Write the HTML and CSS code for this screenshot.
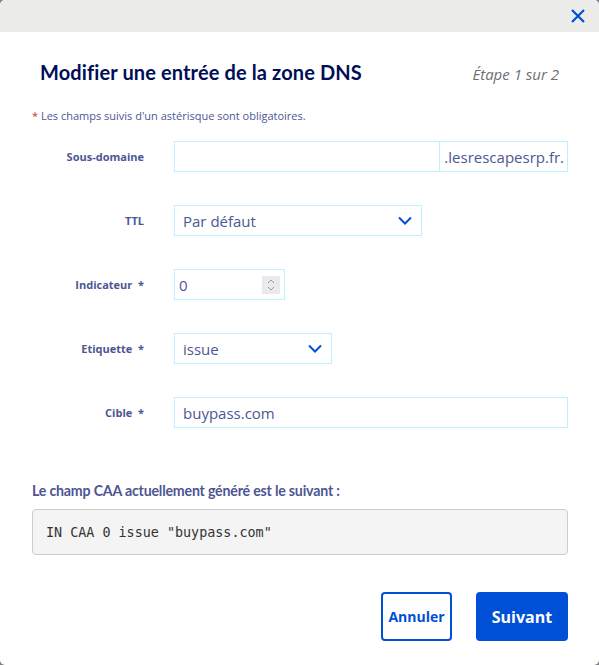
FILE: index.html
```html
<!DOCTYPE html>
<html lang="fr">
<head>
<meta charset="utf-8">
<title>Modifier une entrée de la zone DNS</title>
<link rel="stylesheet" href="styles.css">
</head>
<body>
<div class="modal">
  <div class="modal-top">
    <button class="close" aria-label="Fermer">
      <svg width="16" height="16" viewBox="0 0 16 16"><path d="M2 2 L14 14 M14 2 L2 14" stroke="#0050d7" stroke-width="2.2" fill="none"/></svg>
    </button>
  </div>
  <div class="modal-body">
    <div class="head">
      <h1 class="title">Modifier une entrée de la zone DNS</h1>
      <span class="step">Étape 1 sur 2</span>
    </div>
    <p class="note"><span class="req">*</span> Les champs suivis d'un astérisque sont obligatoires.</p>

    <div class="form">
      <div class="row">
        <label class="lbl">Sous-domaine</label>
        <div class="group wide">
          <input class="inp grow" type="text">
          <span class="addon">.lesrescapesrp.fr.</span>
        </div>
      </div>
      <div class="row">
        <label class="lbl">TTL</label>
        <div class="select ttl"><span>Par défaut</span>
          <svg width="14" height="9" viewBox="0 0 14 9"><path d="M1 1.5 L7 7.5 L13 1.5" stroke="#0050d7" stroke-width="2" fill="none"/></svg>
        </div>
      </div>
      <div class="row">
        <label class="lbl">Indicateur&nbsp; *</label>
        <div class="number"><span>0</span>
          <span class="spin"><svg width="10" height="14" viewBox="0 0 10 14"><path d="M2 5 L5 2 L8 5 M2 9 L5 12 L8 9" stroke="#9a9aa0" stroke-width="1" fill="none"/></svg></span>
        </div>
      </div>
      <div class="row">
        <label class="lbl">Etiquette&nbsp; *</label>
        <div class="select etq"><span>issue</span>
          <svg width="14" height="9" viewBox="0 0 14 9"><path d="M1 1.5 L7 7.5 L13 1.5" stroke="#0050d7" stroke-width="2" fill="none"/></svg>
        </div>
      </div>
      <div class="row">
        <label class="lbl">Cible&nbsp; *</label>
        <div class="field wide"><span>buypass.com</span></div>
      </div>
    </div>

    <h2 class="sub">Le champ CAA actuellement généré est le suivant :</h2>
    <pre class="code">IN CAA 0 issue "buypass.com"</pre>

    <div class="actions">
      <button class="btn ghost">Annuler</button>
      <button class="btn primary">Suivant</button>
    </div>
  </div>
</div>
</body>
</html>
```
FILE: styles.css
```css
html, body { margin: 0; padding: 0; }
body {
  background: #7d7d86;
  width: 599px;
  height: 665px;
  font-family: "Open Sans", sans-serif;
}
.modal {
  width: 599px;
  height: 665px;
  background: #fff;
  border-radius: 5px;
  overflow: hidden;
  box-sizing: border-box;
}
.modal-top {
  height: 32px;
  background: #ecedeb;
  display: flex;
  justify-content: flex-end;
  align-items: center;
  padding-right: 13px;
}
.close {
  border: 0;
  background: none;
  padding: 0;
  width: 16px;
  height: 16px;
  display: block;
}
.modal-body { padding: 0 31px 0 32px; }
.head {
  display: flex;
  justify-content: space-between;
  align-items: baseline;
  padding: 28px 9px 0 8px;
}
.title {
  margin: 0;
  font-family: "Lato", sans-serif;
  font-size: 20px;
  font-weight: 700;
  color: #000e58;
  letter-spacing: 0.12px;
}
.step {
  font-size: 15px;
  font-style: italic;
  color: #6e6e73;
}
.note {
  margin: 24px 0 0 0;
  font-size: 11px;
  color: #4d5693;
}
.req { color: #d22a2a; }
.form { margin-top: 18px; display: flex; flex-direction: column; gap: 33px; }
.row { display: flex; align-items: center; height: 31px; }
.lbl {
  width: 112px;
  text-align: right;
  font-size: 11px;
  font-weight: 700;
  color: #4d5693;
  margin-right: 30px;
}
.group, .select, .number, .field {
  box-sizing: border-box;
  height: 31px;
  border: 1px solid #bef1ff;
  display: flex;
  align-items: center;
  font-size: 15px;
  color: #4d5693;
}
.wide { width: 394px; }
.group { padding: 0; }
.inp {
  border: 0;
  height: 29px;
  flex: 1;
  outline: none;
  padding: 0;
}
.addon {
  border-left: 1px solid #bef1ff;
  height: 29px;
  display: flex;
  align-items: center;
  padding: 0 3px 0 4px;
  font-size: 15px;
}
.select { justify-content: space-between; padding: 0 9px 0 8px; }
.ttl { width: 248px; }
.etq { width: 158px; }
.number { width: 111px; justify-content: space-between; padding: 0 4px 0 4px; }
.spin {
  width: 18px;
  height: 18px;
  background: #e9e9ee;
  display: flex;
  align-items: center;
  justify-content: center;
}
.field { padding: 0 8px; }
.sub {
  margin: 54px 0 0 0;
  font-family: "Lato", sans-serif;
  font-size: 14.2px;
  font-weight: 700;
  color: #4d5693;
  letter-spacing: -0.2px;
}
.code {
  margin: 10px 0 0 0;
  box-sizing: border-box;
  height: 46px;
  background: #f4f4f4;
  border: 1px solid #cccccc;
  border-radius: 4px;
  padding: 0 13px;
  display: flex;
  align-items: center;
  font-family: "DejaVu Sans Mono", monospace;
  font-size: 13.4px;
  color: #333;
}
.actions {
  margin-top: 37px;
  display: flex;
  justify-content: flex-end;
  gap: 24px;
}
.btn {
  height: 49px;
  border-radius: 4px;
  font-family: "Open Sans", sans-serif;
  font-weight: 700;
  box-sizing: border-box;
}
.ghost {
  width: 71px;
  background: #fff;
  border: 2px solid #0050d7;
  color: #0050d7;
  font-size: 14px;
  padding: 0;
}
.primary {
  width: 92px;
  background: #0050d7;
  border: 0;
  color: #fff;
  font-size: 16px;
}
```
